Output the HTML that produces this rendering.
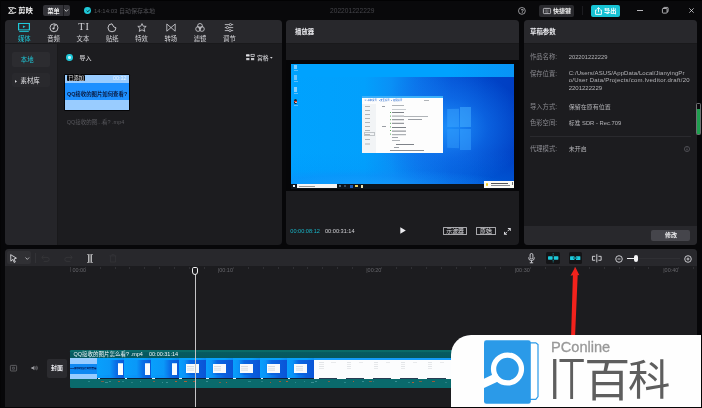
<!DOCTYPE html>
<html lang="zh-CN">
<head>
<meta charset="utf-8">
<title>剪映</title>
<style>
*{box-sizing:border-box;margin:0;padding:0}
html,body{width:702px;height:408px;overflow:hidden;background:#070709}
body{position:relative;font-family:"Liberation Sans","Noto Sans CJK SC",sans-serif;font-size:6.5px;color:#e8e8ea;line-height:1}
.a{position:absolute}
.t{position:absolute;white-space:nowrap;line-height:8px;height:8px}
.panel{position:absolute;background:#1c1c1f;border-radius:4px;overflow:hidden}
.hdr{position:absolute;left:0;top:0;right:0;background:#28282c}
svg{position:absolute;overflow:visible}
</style>
</head>
<body>
<div id="root" style="position:absolute;left:0;top:0;width:702px;height:408px;will-change:transform">
<!-- TOP BAR -->
<div class="a" id="topbar" style="left:0;top:0;width:702px;height:20px;background:#09090b;border-top:1px solid #020203"></div>
<svg style="left:7.7px;top:7.1px" width="8.6" height="7" viewBox="0 0 8.6 7"><path d="M0.5 0.7H5.4L8.2 1.9M0.5 6.3H5.4L8.2 5.1M0.7 0.7L5.6 6.3M0.7 6.3L5.6 0.7" fill="none" stroke="#f2f2f2" stroke-width="0.95" stroke-linejoin="round"/></svg>
<div class="t" style="left:18.2px;top:6.9px;font-size:7.4px;font-weight:bold;color:#f0f0f0">剪映</div>
<div class="a" style="left:43.4px;top:5.2px;width:27px;height:10.8px;background:#333338;border-radius:2px"></div><div class="a" style="left:62.8px;top:5.2px;width:0.7px;height:10.8px;background:#1c1c20"></div>
<div class="t" style="left:47.4px;top:6.6px;font-size:6.1px;color:#f0f0f0;font-weight:bold">菜单</div>
<svg style="left:64.4px;top:9.2px" width="4.6" height="2.8" viewBox="0 0 5 3"><path d="M0.5 0.5L2.5 2.5L4.5 0.5" fill="none" stroke="#ddd" stroke-width="0.9"/></svg>
<div class="a" style="left:84.3px;top:7.2px;width:6.8px;height:6.8px;border-radius:50%;background:#1fc8d8"></div>
<svg style="left:85.5px;top:8.8px" width="4.4" height="3.6" viewBox="0 0 5 4"><path d="M0.7 2L2 3.2L4.3 0.7" fill="none" stroke="#0b0b0d" stroke-width="0.9"/></svg>
<div class="t" style="left:94px;top:6.5px;font-size:6px;color:#505055">14:14:03 自动保存本地</div>
<div class="t" style="left:330px;top:7px;font-size:6.65px;color:#45454a">202201222229</div>


<!-- top right controls -->
<svg style="left:518.4px;top:7px" width="7.8" height="7.8" viewBox="0 0 7.8 7.8"><circle cx="3.9" cy="3.9" r="3.4" fill="none" stroke="#c0c0c4" stroke-width="0.75"/></svg>
<div class="t" style="left:518.4px;top:7px;width:7.8px;text-align:center;font-size:5px;color:#c8c8cc;font-weight:bold">?</div>
<div class="a" style="left:539px;top:4.5px;width:34.5px;height:12px;background:#2a2a2e;border-radius:2px"></div>
<svg style="left:543px;top:7.5px" width="8" height="6" viewBox="0 0 8 6"><rect x="0.4" y="0.4" width="7.2" height="5.2" rx="0.8" fill="none" stroke="#d8d8dc" stroke-width="0.8"/><path d="M1.8 2H6.2M1.8 3.2H6.2M2.6 4.4H5.4" stroke="#d8d8dc" stroke-width="0.6" stroke-dasharray="0.8 0.5"/></svg>
<div class="t" style="left:553px;top:6.5px;font-size:6px;font-weight:bold;color:#f0f0f0">快捷键</div>
<div class="a" style="left:581.5px;top:6px;width:0.8px;height:9px;background:#1c1c20"></div>
<div class="a" style="left:591px;top:4.5px;width:28.5px;height:12px;background:#17c3d4;border-radius:2px"></div>
<svg style="left:594.5px;top:6.5px" width="7" height="8" viewBox="0 0 7 8"><path d="M1.8 3H0.6V7.4H6.4V3H5.2M3.5 5.2V0.8M1.9 2.2L3.5 0.6L5.1 2.2" fill="none" stroke="#fff" stroke-width="0.9"/></svg>
<div class="t" style="left:604px;top:6.5px;font-size:6.2px;font-weight:bold;color:#fff">导出</div>
<div class="a" style="left:637.2px;top:10.2px;width:5.4px;height:0.9px;background:#b8b8bc"></div>
<svg style="left:662.2px;top:7.4px" width="6.6" height="6.6" viewBox="0 0 8 8"><rect x="0.5" y="1.8" width="5.6" height="5.6" rx="0.8" fill="none" stroke="#e0e0e4" stroke-width="0.9"/><path d="M2 1.8V1.2Q2 0.5 2.7 0.5H6.6Q7.4 0.5 7.4 1.3V5.2Q7.4 6 6.6 6H6.1" fill="none" stroke="#e0e0e4" stroke-width="0.9"/></svg>
<svg style="left:689px;top:8.4px" width="5" height="5" viewBox="0 0 6 6"><path d="M0.4 0.4L5.6 5.6M5.6 0.4L0.4 5.6" stroke="#e0e0e4" stroke-width="0.9"/></svg>

<!-- MEDIA PANEL -->
<div class="panel" id="media" style="left:5px;top:20.3px;width:277px;height:224.4px">
  <div class="hdr" style="height:23px;border-bottom:1px solid #19191b;box-sizing:content-box"></div>
  <div class="a" style="left:0;top:24px;width:52px;bottom:0;background:#252529"></div><div class="a" style="left:52px;top:24px;width:1px;bottom:0;background:#19191b"></div>
</div>


<!-- tabs -->
<svg style="left:18.4px;top:23.2px" width="12" height="9.4" viewBox="0 0 10 9.4" preserveAspectRatio="none"><rect x="0.5" y="0.5" width="9" height="6.4" fill="none" stroke="#1fc8d8" stroke-width="1"/><path d="M4.1 2.4L6.3 3.7L4.1 5Z" fill="#1fc8d8"/><path d="M1 8.6H9" stroke="#1fc8d8" stroke-width="0.9"/></svg>
<div class="t" style="left:14.3px;top:35px;width:20px;text-align:center;font-size:6.3px;color:#1fc8d8">媒体</div>
<svg style="left:48.6px;top:23.2px" width="10" height="9.4" viewBox="0 0 10 9.4"><circle cx="5" cy="4.8" r="4" fill="none" stroke="#d6d6da" stroke-width="0.9"/><circle cx="4.4" cy="5.6" r="1" fill="#d6d6da"/><path d="M5.2 5.6V1.8L6.8 2.6" fill="none" stroke="#d6d6da" stroke-width="0.8"/></svg>
<div class="t" style="left:43.6px;top:35px;width:20px;text-align:center;font-size:6.3px;color:#d6d6da">音频</div>
<div class="t" style="left:77.4px;top:22.4px;width:12px;text-align:center;font-family:'Liberation Serif',serif;font-size:10.2px;line-height:10px;height:10px;color:#d6d6da;letter-spacing:0.9px;text-indent:0.9px">TI</div>
<div class="t" style="left:72.9px;top:35px;width:20px;text-align:center;font-size:6.3px;color:#d6d6da">文本</div>
<svg style="left:107.2px;top:23.2px" width="10" height="9.4" viewBox="0 0 10 9.4"><path d="M5 0.8A4 4 0 1 0 9 4.8Q6.5 5 5 0.8Z" fill="none" stroke="#d6d6da" stroke-width="0.9"/></svg>
<div class="t" style="left:102.2px;top:35px;width:20px;text-align:center;font-size:6.3px;color:#d6d6da">贴纸</div>
<svg style="left:136.5px;top:23.2px" width="10" height="9.4" viewBox="0 0 10 9.4"><path d="M5 0.6L6.2 3.2L9.2 3.4L7 5.4L7.8 8.4L5 6.8L2.2 8.4L3 5.4L0.8 3.4L3.8 3.2Z" fill="none" stroke="#d6d6da" stroke-width="0.8"/></svg>
<div class="t" style="left:131.5px;top:35px;width:20px;text-align:center;font-size:6.3px;color:#d6d6da">特效</div>
<svg style="left:165.8px;top:23.2px" width="10" height="9.4" viewBox="0 0 10 9.4"><path d="M0.8 1L9.2 8.2V1L0.8 8.2Z" fill="none" stroke="#d6d6da" stroke-width="0.8"/></svg>
<div class="t" style="left:160.8px;top:35px;width:20px;text-align:center;font-size:6.3px;color:#d6d6da">转场</div>
<svg style="left:195.1px;top:23.2px" width="10" height="9.4" viewBox="0 0 10 9.4"><circle cx="5" cy="2.9" r="2.4" fill="none" stroke="#d6d6da" stroke-width="0.8"/><circle cx="3.1" cy="6" r="2.4" fill="none" stroke="#d6d6da" stroke-width="0.8"/><circle cx="6.9" cy="6" r="2.4" fill="none" stroke="#d6d6da" stroke-width="0.8"/></svg>
<div class="t" style="left:190.1px;top:35px;width:20px;text-align:center;font-size:6.3px;color:#d6d6da">滤镜</div>
<svg style="left:224.4px;top:23.2px" width="10" height="9.4" viewBox="0 0 10 9.4"><path d="M0.8 1.6H9.2M0.8 4.6H9.2M0.8 7.6H9.2" stroke="#d6d6da" stroke-width="0.8"/><circle cx="6.4" cy="1.6" r="1.1" fill="#28282c" stroke="#d6d6da" stroke-width="0.7"/><circle cx="3.4" cy="4.6" r="1.1" fill="#28282c" stroke="#d6d6da" stroke-width="0.7"/><circle cx="6" cy="7.6" r="1.1" fill="#28282c" stroke="#d6d6da" stroke-width="0.7"/></svg>
<div class="t" style="left:219.4px;top:35px;width:20px;text-align:center;font-size:6.3px;color:#d6d6da">调节</div>
<!-- media sidebar -->
<div class="a" style="left:12.3px;top:52px;width:38px;height:14.8px;background:#2c2c30;border-radius:2px"></div>
<div class="t" style="left:20.8px;top:56.1px;font-size:6.4px;color:#1fc8d8">本地</div>
<div class="a" style="left:12.3px;top:72.7px;width:38px;height:14.8px;background:#29292d;border-radius:2px"></div>
<svg style="left:15.2px;top:80px" width="2" height="2.8" viewBox="0 0 2.5 3.5"><path d="M0 0L2.5 1.75L0 3.5Z" fill="#d8d8dc"/></svg>
<div class="t" style="left:20.6px;top:77.2px;font-size:6.4px;color:#e4e4e8">素材库</div>
<!-- import -->
<div class="a" style="left:66.4px;top:54.3px;width:6.8px;height:6.8px;border-radius:50%;background:#1fc8d8"></div>
<div class="a" style="left:68.4px;top:56.4px;width:2.6px;height:2.6px;border-radius:50%;background:#bff4fa"></div>
<div class="t" style="left:79.5px;top:54px;font-size:6px;color:#e4e4e8">导入</div>
<!-- grid toggle -->
<svg style="left:246px;top:54px" width="8.5" height="6.5" viewBox="0 0 8.5 6.5"><rect x="0" y="0.3" width="3.6" height="2.2" rx="0.6" fill="#e0e0e4"/><rect x="5" y="0.3" width="3.2" height="2.2" fill="none" stroke="#e0e0e4" stroke-width="0.7"/><rect x="0.2" y="4" width="3.2" height="2.2" fill="#c8c8cc"/><rect x="5" y="4" width="3.2" height="2.2" fill="#c8c8cc"/></svg>
<div class="t" style="left:257px;top:54px;font-size:5.8px;color:#e4e4e8">宫格</div>
<svg style="left:270px;top:56.8px" width="2.6" height="1.8" viewBox="0 0 2.6 1.8"><path d="M0 0H2.6L1.3 1.8Z" fill="#d0d0d4"/></svg>
<!-- thumbnail -->
<div class="a" style="left:63.9px;top:73.8px;width:66.1px;height:37.6px;background:#050507;border-radius:1.5px;overflow:hidden">
  <div class="a" style="left:1px;top:0.8px;width:64.4px;height:35.4px;background:#99ccff"></div>
  <div class="a" style="left:1px;top:8.9px;width:64.4px;height:16.9px;background:#1e90ff"></div>
  <div class="a" style="left:3.6px;top:1px;width:17.2px;height:6px;background:#0a0a0c;border-radius:1px"></div>
  <div class="t" style="left:4.4px;top:0.1px;font-size:5.2px;color:#f0f0f0">已添加</div>
  <div class="t" style="right:3.4px;top:0.6px;font-size:5.4px;color:#e4f2ff">00:32</div>
  <div class="t" style="left:1px;top:15.8px;width:64.4px;text-align:center;font-size:5.4px;color:#0a1a40;font-weight:bold">QQ接收的图片如何查看?</div>
</div>
<div class="t" style="left:66.8px;top:117.6px;font-size:5.5px;color:#58585d">QQ接收的图...看? .mp4</div>

<!-- PLAYER PANEL -->
<div class="panel" id="player" style="left:286px;top:20.3px;width:233px;height:224.4px">
  <div class="hdr" style="height:23px;border-bottom:1px solid #19191b;box-sizing:content-box"></div>
</div>


<!-- player -->
<div class="t" style="left:295px;top:28px;font-size:6.4px;color:#ececf0;font-weight:bold">播放器</div>
<div class="a" id="canvas" style="left:286px;top:60px;width:233px;height:131px;background:#060608"></div>
<div class="a" id="video" style="left:291px;top:63.7px;width:223.3px;height:125px;overflow:hidden;background:#00a2fe">
  <!-- wallpaper -->
  <div class="a" style="left:0;top:0;width:100%;height:100%;background:linear-gradient(90deg,#00a2fe 0%,#02a0fc 33%,#0a90f6 45%,#0a72e8 57%,#0452d4 72%,#0044c8 87%,#003ec2 100%)"></div>
  <div class="a" style="left:40px;top:0;width:184px;height:125px;background:radial-gradient(ellipse 78px 60px at 118px 64px,rgba(30,146,252,0.9),rgba(20,124,244,0.5) 50%,rgba(10,100,230,0) 100%)"></div>
  <div class="a" style="left:0;top:88px;width:100%;height:37px;background:linear-gradient(180deg,rgba(0,150,250,0) 0%,rgba(0,140,248,0.3) 100%)"></div>
  <div class="a" style="left:0;top:95px;width:100%;height:26px;background:radial-gradient(ellipse 150px 16px at 70px 26px,rgba(24,156,252,0.75),rgba(20,140,248,0.35) 60%,rgba(10,110,236,0) 100%)"></div>
  <div class="a" style="left:0;top:0;width:100%;height:13.5px;background:linear-gradient(90deg,#00a2fe 0%,#00a2fe 72%,#0894f6 100%)"></div>
  <!-- windows logo -->
  <div class="a" style="left:156px;top:45.5px;width:12px;height:18px;background:rgba(60,165,255,0.5);transform:perspective(60px) rotateY(-8deg)"></div>
  <div class="a" style="left:169px;top:43.5px;width:11px;height:20px;background:rgba(70,175,255,0.55)"></div>
  <div class="a" style="left:156px;top:65px;width:12px;height:19px;background:rgba(55,160,252,0.45);transform:perspective(60px) rotateY(-8deg)"></div>
  <div class="a" style="left:169px;top:65px;width:11px;height:21.5px;background:rgba(60,165,255,0.5)"></div>
  <!-- desktop icons -->
  <div class="a" style="left:3px;top:1.4px;width:3.2px;height:4px;background:#7ccbfd"></div>
  <div class="a" style="left:2.6px;top:6.4px;width:4px;height:0.9px;background:#5cc0fd"></div>
  <div class="a" style="left:3px;top:11.8px;width:3.2px;height:4.2px;background:#6cc4fc"></div>
  <div class="a" style="left:2.6px;top:17.6px;width:4px;height:0.9px;background:#5cc0fd"></div>
  <div class="a" style="left:3px;top:23.8px;width:3.2px;height:4.2px;background:#84cefd"></div>
  <div class="a" style="left:2.6px;top:29.4px;width:4px;height:0.9px;background:#5cc0fd"></div>
  <div class="a" style="left:2.8px;top:34.9px;width:3.6px;height:5px;background:#2a2226;border-radius:50% 50% 40% 40%"></div>
  <div class="a" style="left:3.6px;top:37px;width:2px;height:2.6px;background:#f0f0f0;border-radius:40%"></div>
  <div class="a" style="left:2.8px;top:37.4px;width:3.6px;height:1.2px;background:#e43a28"></div>
  <div class="a" style="left:2.6px;top:41px;width:4px;height:0.9px;background:#5cc0fd"></div>
  <!-- app window -->
  <div class="a" style="left:71.2px;top:32.1px;width:81px;height:57.5px;background:#fdfdfd;overflow:hidden">
    <div class="a" style="left:0;top:0;width:100%;height:2.2px;background:#3cb0fa"></div>
    <div class="t" style="left:2.4px;top:2.4px;font-size:2.3px;line-height:4px;height:4px;color:#2a6ad0">▣ 基本设置 &#160; ▸ 安全设置 &#160; ▸ 权限设置</div>
    <div class="a" style="left:0;top:8px;width:14px;height:50px;background:#f2f4f6"></div>
    <div class="a" style="left:3px;top:10px;width:5px;height:1px;background:#b0b4b8;box-shadow:0 4px 0 #b0b4b8,0 8px 0 #b0b4b8,0 12px 0 #b0b4b8,0 16px 0 #b0b4b8,0 20px 0 #b0b4b8,0 24px 0 #b0b4b8,0 28px 0 #b0b4b8,0 33px 0 #b0b4b8,0 37.5px 0 #b0b4b8"></div>
    <div class="a" style="left:2px;top:36.5px;width:11px;height:4px;border:0.5px solid #c0c4c8"></div>
    <div class="a" style="left:20px;top:10.5px;width:3px;height:1px;background:#9a9ea4"></div>
    <div class="a" style="left:20px;top:30.5px;width:4px;height:1px;background:#9a9ea4"></div>
    <div class="a" style="left:30px;top:9.5px;width:12px;height:1px;background:#b0b4b8"></div>
    <div class="a" style="left:30px;top:13px;width:14px;height:0.8px;background:#c8ccd0"></div>
    <div class="a" style="left:30px;top:16.5px;width:12px;height:1px;background:#7e8288;box-shadow:0 3.6px 0 #9a9ea4,0 7.2px 0 #7e8288,0 10.8px 0 #7e8288"></div>
    <div class="a" style="left:42px;top:20.1px;width:24px;height:1px;background:#b0b4b8"></div>
    <div class="a" style="left:46px;top:23.7px;width:14px;height:1px;background:#9a9ea4"></div>
    <div class="a" style="left:28px;top:16.5px;width:1.2px;height:1px;background:#58b058;box-shadow:0 3.6px 0 #58b058,0 7.2px 0 #58b058,0 10.8px 0 #58b058,0 14.4px 0 #58b058,0 18px 0 #58b058,0 21.6px 0 #58b058"></div>
    <div class="a" style="left:30px;top:30.9px;width:14px;height:1px;background:#7e8288;box-shadow:0 3.6px 0 #7e8288,0 7.2px 0 #9a9ea4"></div>
    <div class="a" style="left:30px;top:41.5px;width:6px;height:1px;background:#a0a4aa"></div>
    <div class="a" style="left:30px;top:44.5px;width:8px;height:1px;background:#b0b4b8"></div>
    <div class="a" style="left:34px;top:48px;width:18px;height:1px;background:#7e8288"></div>
    <div class="a" style="left:32px;top:51.5px;width:5px;height:1px;background:#9a9ea4"></div>
    <div class="a" style="left:28px;top:54.5px;width:34px;height:1px;background:#8a8e94"></div>
    <div class="a" style="left:34px;top:57px;width:10px;height:1px;background:#9a9ea4"></div>
    <div class="a" style="left:62px;top:4px;width:5px;height:0.8px;background:#b0b4b8"></div>
  </div>
  <!-- taskbar -->
  <div class="a" style="left:0;top:120.3px;width:100%;height:4.7px;background:#0d141c"></div>
  <div class="a" style="left:1.6px;top:121.4px;width:2.4px;height:2.4px;background:#e8f0f8"></div>
  <div class="a" style="left:5.8px;top:120.8px;width:39.8px;height:3.6px;background:#f4f4f4"></div>
  <div class="a" style="left:8px;top:122.2px;width:16px;height:0.8px;background:#9a9a9a"></div>
  <div class="a" style="left:48px;top:121.6px;width:2px;height:2px;background:#5a6a7a"></div>
  <div class="a" style="left:53px;top:121.6px;width:2px;height:2px;background:#3a4a5a"></div>
  <div class="a" style="left:58.6px;top:121.2px;width:3px;height:3px;background:#1a5ab8"></div>
  <div class="a" style="left:64px;top:121.4px;width:3px;height:2.4px;background:#e8d060"></div>
  <div class="a" style="left:70.4px;top:121.6px;width:1.6px;height:2.4px;background:#e8e0b0"></div>
  <!-- notification -->
  <div class="a" style="left:193px;top:117.8px;width:29.5px;height:6.4px;background:#fbfbf6"></div>
  <div class="a" style="left:194.6px;top:119.8px;width:2.6px;height:2.6px;background:#f0d020;border-radius:50%"></div>
  <div class="a" style="left:199.5px;top:119.4px;width:17px;height:1.2px;background:#50545a"></div>
  <div class="a" style="left:199.5px;top:121.8px;width:19px;height:0.9px;background:#8a8e94"></div>
  <div class="a" style="left:220.5px;top:118.6px;width:0.8px;height:2.4px;background:#70747a"></div>
</div>
<!-- player controls -->
<div class="t" style="left:290.3px;top:226.5px;font-size:5.6px;color:#18b4c6">00:00:08:12</div>
<div class="t" style="left:325px;top:226.5px;font-size:5.6px;color:#d0d0d4">00:00:31:14</div>
<svg style="left:399.5px;top:227px" width="6" height="7" viewBox="0 0 6 7"><path d="M0.3 0.2L5.8 3.5L0.3 6.8Z" fill="#ececf0"/></svg>
<div class="a" style="left:443.4px;top:226.8px;width:23.4px;height:8px;border:0.75px solid #a8a8ac;border-radius:0.5px"></div>
<div class="t" style="left:443.4px;top:226.8px;width:23.4px;text-align:center;font-size:5.9px;color:#e0e0e4">示波器</div>
<div class="a" style="left:476.2px;top:226.8px;width:19.4px;height:8px;border:0.75px solid #a8a8ac;border-radius:0.5px"></div>
<div class="t" style="left:476.2px;top:226.8px;width:19.4px;text-align:center;font-size:5.9px;color:#e0e0e4">原始</div>
<svg style="left:503.8px;top:227.8px" width="6.8" height="6.8" viewBox="0 0 6.8 6.8"><path d="M3.9 0.5H6.3V2.9M6.3 0.5L3.8 3M2.9 6.3H0.5V3.9M0.5 6.3L3 3.8" fill="none" stroke="#e4e4e8" stroke-width="0.95"/></svg>

<!-- RIGHT PANEL -->
<div class="panel" id="draft" style="left:523.5px;top:20.3px;width:173.5px;height:224.4px">
  <div class="hdr" style="height:22.5px;border-bottom:1px solid #19191b;box-sizing:content-box"></div>
  <div class="a" style="left:0;right:0;bottom:0;height:19px;background:#28282c"></div>
</div>


<!-- draft params -->
<div class="t" style="left:530px;top:28.2px;font-size:6.4px;color:#ececf0;font-weight:bold">草稿参数</div>
<div class="t" style="left:530px;top:53px;font-size:6.3px;color:#8a8a90">作品名称:</div>
<div class="t" style="left:568.7px;top:53px;font-size:5.8px;color:#b4b4b8">202201222229</div>
<div class="t" style="left:530px;top:69.7px;font-size:6.3px;color:#8a8a90">保存位置:</div>
<div class="t" style="left:568.7px;top:69.7px;font-size:6px;letter-spacing:0.1px;color:#b4b4b8;line-height:7.8px;height:auto;white-space:nowrap;width:130px">C:/Users/ASUS/AppData/Local/JianyingPr<br><span style="letter-spacing:0.24px">o/User Data/Projects/com.lveditor.draft/20</span><br><span style="letter-spacing:0">2201222229</span></div>
<div class="t" style="left:530px;top:103px;font-size:6.3px;color:#8a8a90">导入方式:</div>
<div class="t" style="left:568.7px;top:103px;font-size:6px;color:#b4b4b8">保留在原有位置</div>
<div class="t" style="left:530px;top:118.6px;font-size:6.3px;color:#8a8a90">色彩空间:</div>
<div class="t" style="left:568.7px;top:118.6px;font-size:5.85px;color:#b4b4b8">标准 SDR - Rec.709</div>
<div class="a" style="left:530px;top:136.2px;width:161px;height:0.8px;background:#2a2a2e"></div>
<div class="t" style="left:530px;top:145px;font-size:6.3px;color:#8a8a90">代理模式:</div>
<div class="t" style="left:568.7px;top:145px;font-size:6px;color:#b4b4b8">未开启</div>
<svg style="left:684px;top:146px" width="6" height="6" viewBox="0 0 6 6"><circle cx="3" cy="3" r="2.6" fill="none" stroke="#6a6a70" stroke-width="0.6"/><path d="M3 2.6V4.4M3 1.5V2" stroke="#8a8a90" stroke-width="0.6"/></svg>
<div class="a" style="left:651.3px;top:230px;width:39.2px;height:10.8px;background:#45454b;border-radius:2px"></div>
<div class="t" style="left:651.3px;top:231.4px;width:39.2px;text-align:center;font-size:6px;color:#f0f0f2;font-weight:bold">修改</div>
<!-- green meter -->
<div class="a" style="left:695.7px;top:103px;width:5px;height:32.4px;background:#0a0a0c;border:0.8px solid #707074;border-radius:1.2px"></div>
<div class="a" style="left:696.9px;top:109px;width:2.7px;height:25px;background:#1e9e4e"></div>

<!-- TIMELINE PANEL -->
<div class="panel" id="timeline" style="left:5px;top:249.3px;width:692px;height:170px;border-radius:4px 4px 0 0">
  <div class="hdr" style="height:16.8px"></div>
</div>


<!-- timeline toolbar -->
<div class="a" style="left:7.4px;top:251.4px;width:24px;height:12.6px;background:#303034;border-radius:2px"></div>
<svg style="left:10.4px;top:253.8px" width="7.6" height="9" viewBox="0 0 8 9.5"><path d="M0.7 0.7L6.8 4.4L4.2 5.2L5.6 8.4L4.4 8.9L3 5.7L0.9 7.6Z" fill="none" stroke="#ececf0" stroke-width="0.85" stroke-linejoin="round"/></svg>
<svg style="left:24.6px;top:256.8px" width="4.6" height="3" viewBox="0 0 4.6 3"><path d="M0.5 0.5L2.3 2.4L4.1 0.5" fill="none" stroke="#c8c8cc" stroke-width="0.8"/></svg>
<div class="a" style="left:35px;top:252.5px;width:0.8px;height:10.5px;background:#323236"></div>
<svg style="left:40.5px;top:254.5px" width="9" height="7" viewBox="0 0 9 7"><path d="M2.6 0.6L0.7 2.4L2.6 4.2M0.9 2.4H6Q8.2 2.4 8.2 4.4Q8.2 6.4 6 6.4H2.6" fill="none" stroke="#36363a" stroke-width="0.85"/></svg>
<svg style="left:63.5px;top:254.5px" width="9" height="7" viewBox="0 0 9 7"><path d="M6.4 0.6L8.3 2.4L6.4 4.2M8.1 2.4H3Q0.8 2.4 0.8 4.4Q0.8 6.4 3 6.4H6.4" fill="none" stroke="#36363a" stroke-width="0.85"/></svg>
<svg style="left:86.6px;top:253.6px" width="6" height="9" viewBox="0 0 6 9"><path d="M0.3 0.5H1.5V8.5H0.3M5.7 0.5H4.5V8.5H5.7M3 0V9" fill="none" stroke="#f0f0f2" stroke-width="0.7"/></svg>
<svg style="left:108.5px;top:253.8px" width="8" height="8.6" viewBox="0 0 8 8.6"><path d="M0.5 1.8H7.5M2.8 1.8V0.6H5.2V1.8M1.4 1.8V8H6.6V1.8" fill="none" stroke="#343438" stroke-width="0.85"/></svg>
<!-- right tools -->
<svg style="left:527.5px;top:253px" width="7" height="10.4" viewBox="0 0 7 10.4"><rect x="2.1" y="0.5" width="2.8" height="5.4" rx="1.4" fill="none" stroke="#e4e4e8" stroke-width="0.85"/><path d="M0.6 4.4Q0.6 7.6 3.5 7.6Q6.4 7.6 6.4 4.4M3.5 7.6V9.6M1.8 9.8H5.2" fill="none" stroke="#e4e4e8" stroke-width="0.85"/></svg>
<div class="a" style="left:546px;top:252px;width:13.6px;height:12.2px;background:#141416;border-radius:1.5px"></div>
<svg style="left:547.8px;top:253.2px" width="10.4" height="9.8" viewBox="0 0 11.2 10.6"><rect x="0" y="3.4" width="5" height="3.8" rx="0.6" fill="#1ccadb"/><rect x="6.2" y="3.4" width="5" height="3.8" rx="0.6" fill="#1ccadb"/><path d="M5.6 0.4V3M5.6 7.6V10.2" stroke="#1ccadb" stroke-width="0.8" stroke-dasharray="0.9 0.7"/></svg>
<div class="a" style="left:568.5px;top:252px;width:13.4px;height:12.2px;background:#141416;border-radius:1.5px"></div>
<svg style="left:569.9px;top:256px" width="10.4" height="4.1" viewBox="0 0 11.6 4.6"><rect x="0" y="0.2" width="5" height="4.2" rx="0.6" fill="#1ccadb"/><rect x="6.6" y="0.2" width="5" height="4.2" rx="0.6" fill="#1ccadb"/><path d="M3.4 2.3H8.2" stroke="#0f5a62" stroke-width="1.3"/><path d="M4.6 2.3H7" stroke="#1ccadb" stroke-width="0.9"/></svg>
<svg style="left:591.8px;top:254.2px" width="9.6" height="8.6" viewBox="0 0 10.8 9.6"><path d="M3.6 2.6H0.5V7H3.6M7.2 2.6H10.3V7H7.2M5.4 0.2V9.4" fill="none" stroke="#e8e8ec" stroke-width="0.95"/></svg>
<svg style="left:614.8px;top:254.6px" width="8" height="8" viewBox="0 0 8 8"><circle cx="4" cy="4" r="3.3" fill="none" stroke="#e4e4e8" stroke-width="0.85"/><path d="M2.5 4H5.5" stroke="#e4e4e8" stroke-width="0.8"/></svg>
<div class="a" style="left:638px;top:258.1px;width:42px;height:0.9px;background:#303034"></div>
<div class="a" style="left:627px;top:257.8px;width:8px;height:1.5px;background:#f0f0f2"></div>
<div class="a" style="left:634px;top:254.9px;width:4.4px;height:6.8px;background:#f4f4f6;border-radius:2px"></div>
<svg style="left:684.4px;top:254.6px" width="8" height="8" viewBox="0 0 8 8"><circle cx="4" cy="4" r="3.3" fill="none" stroke="#e4e4e8" stroke-width="0.85"/><path d="M2.5 4H5.5M4 2.5V5.5" stroke="#e4e4e8" stroke-width="0.8"/></svg>
<!-- ruler -->
<div class="a" style="left:69.7px;top:267px;width:0.7px;height:5px;background:#38383c"></div>
<div class="t" style="left:72.4px;top:266.2px;font-size:5.5px;color:#66666b">00:00</div>
<div class="t" style="left:217.8px;top:266.2px;font-size:5.5px;color:#66666b">|00:10</div>
<div class="t" style="left:366.2px;top:266.2px;font-size:5.5px;color:#66666b">|00:20</div>
<div class="t" style="left:514.6px;top:266.2px;font-size:5.5px;color:#66666b">|00:30</div>
<div class="t" style="left:663.2px;top:266.2px;font-size:5.5px;color:#66666b">|00:40</div>
<div class="a" style="left:84.8px;top:267px;width:0.6px;height:1.8px;background:#303034"></div>
<div class="a" style="left:99.7px;top:267px;width:0.6px;height:1.8px;background:#303034"></div>
<div class="a" style="left:114.5px;top:267px;width:0.6px;height:1.8px;background:#303034"></div>
<div class="a" style="left:129.3px;top:267px;width:0.6px;height:1.8px;background:#303034"></div>
<div class="a" style="left:144.2px;top:267px;width:0.6px;height:1.8px;background:#303034"></div>
<div class="a" style="left:159.0px;top:267px;width:0.6px;height:1.8px;background:#303034"></div>
<div class="a" style="left:173.8px;top:267px;width:0.6px;height:1.8px;background:#303034"></div>
<div class="a" style="left:188.6px;top:267px;width:0.6px;height:1.8px;background:#303034"></div>
<div class="a" style="left:203.5px;top:267px;width:0.6px;height:1.8px;background:#303034"></div>
<div class="a" style="left:233.1px;top:267px;width:0.6px;height:1.8px;background:#303034"></div>
<div class="a" style="left:248.0px;top:267px;width:0.6px;height:1.8px;background:#303034"></div>
<div class="a" style="left:262.8px;top:267px;width:0.6px;height:1.8px;background:#303034"></div>
<div class="a" style="left:277.6px;top:267px;width:0.6px;height:1.8px;background:#303034"></div>
<div class="a" style="left:292.5px;top:267px;width:0.6px;height:1.8px;background:#303034"></div>
<div class="a" style="left:307.3px;top:267px;width:0.6px;height:1.8px;background:#303034"></div>
<div class="a" style="left:322.1px;top:267px;width:0.6px;height:1.8px;background:#303034"></div>
<div class="a" style="left:336.9px;top:267px;width:0.6px;height:1.8px;background:#303034"></div>
<div class="a" style="left:351.8px;top:267px;width:0.6px;height:1.8px;background:#303034"></div>
<div class="a" style="left:381.4px;top:267px;width:0.6px;height:1.8px;background:#303034"></div>
<div class="a" style="left:396.3px;top:267px;width:0.6px;height:1.8px;background:#303034"></div>
<div class="a" style="left:411.1px;top:267px;width:0.6px;height:1.8px;background:#303034"></div>
<div class="a" style="left:425.9px;top:267px;width:0.6px;height:1.8px;background:#303034"></div>
<div class="a" style="left:440.8px;top:267px;width:0.6px;height:1.8px;background:#303034"></div>
<div class="a" style="left:455.6px;top:267px;width:0.6px;height:1.8px;background:#303034"></div>
<div class="a" style="left:470.4px;top:267px;width:0.6px;height:1.8px;background:#303034"></div>
<div class="a" style="left:485.2px;top:267px;width:0.6px;height:1.8px;background:#303034"></div>
<div class="a" style="left:500.1px;top:267px;width:0.6px;height:1.8px;background:#303034"></div>
<div class="a" style="left:529.7px;top:267px;width:0.6px;height:1.8px;background:#303034"></div>
<div class="a" style="left:544.6px;top:267px;width:0.6px;height:1.8px;background:#303034"></div>
<div class="a" style="left:559.4px;top:267px;width:0.6px;height:1.8px;background:#303034"></div>
<div class="a" style="left:574.2px;top:267px;width:0.6px;height:1.8px;background:#303034"></div>
<div class="a" style="left:589.1px;top:267px;width:0.6px;height:1.8px;background:#303034"></div>
<div class="a" style="left:603.9px;top:267px;width:0.6px;height:1.8px;background:#303034"></div>
<div class="a" style="left:618.7px;top:267px;width:0.6px;height:1.8px;background:#303034"></div>
<div class="a" style="left:633.5px;top:267px;width:0.6px;height:1.8px;background:#303034"></div>
<div class="a" style="left:648.4px;top:267px;width:0.6px;height:1.8px;background:#303034"></div>
<div class="a" style="left:678.0px;top:267px;width:0.6px;height:1.8px;background:#303034"></div>
<div class="a" style="left:692.9px;top:267px;width:0.6px;height:1.8px;background:#303034"></div>
<!-- track header -->
<svg style="left:10.2px;top:365px" width="7" height="6.4" viewBox="0 0 7 6.4"><rect x="0.4" y="0.4" width="6.2" height="5.6" rx="0.8" fill="none" stroke="#77777c" stroke-width="0.7"/><path d="M2.6 2.2H4.4V4.2H2.6Z" fill="none" stroke="#77777c" stroke-width="0.6"/></svg>
<svg style="left:31.4px;top:365.2px" width="7" height="6" viewBox="0 0 7 6"><path d="M0.5 2.1H1.8L3.4 0.7V5.3L1.8 3.9H0.5Z" fill="#9a9a9f"/><path d="M4.5 1.6Q5.6 3 4.5 4.4M5.6 0.8Q7.2 3 5.6 5.2" fill="none" stroke="#9a9a9f" stroke-width="0.6"/></svg>
<div class="a" style="left:46.7px;top:358.6px;width:20.6px;height:19.6px;background:#2b2b2f;border-radius:2px"></div>
<div class="t" style="left:46.7px;top:364.4px;width:20.6px;text-align:center;font-size:6px;font-weight:bold;color:#ececf0">封面</div>
<!-- clip -->
<div class="a" style="left:70px;top:349.6px;width:395px;height:38px;background:#0a6a6c;border-radius:1.5px 0 0 1.5px"></div>
<div class="a" style="left:70px;top:349.6px;width:395px;height:8.4px;background:linear-gradient(180deg,#0a6a68 0,#0a6a68 1.6px,#065a60 2.6px,#06585e 100%);border-radius:1.5px 0 0 0"></div>
<div class="t" style="left:73.5px;top:350.2px;font-size:5.5px;color:#f0f6f8">QQ接收的图片怎么看? .mp4 &#160;&#160; 00:00:31:14</div>
<div class="a" style="left:70.0px;top:357.8px;width:27.45px;height:20.8px;background:#99ccff"></div>
<div class="a" style="left:70.0px;top:363.5px;width:27.45px;height:10px;background:#1088f2"></div>
<div class="t" style="left:70.0px;top:366.5px;width:27.15px;text-align:center;font-size:2.5px;line-height:4px;height:4px;color:#061040;font-weight:bold;overflow:hidden">QQ接收的图片如何查看?</div>
<div class="a" style="left:97.15px;top:357.8px;width:27.45px;height:20.8px;background:linear-gradient(90deg,#08a0fc 0%,#0a98f8 45%,#0a6ee6 68%,#0a58d8 100%)"></div>
<div class="a" style="left:97.15px;top:357.8px;width:27.45px;height:2.6px;background:linear-gradient(90deg,#08a0fc 0%,#08a0fc 70%,#0a8cf2 100%)"></div>
<div class="a" style="left:97.15px;top:375.2px;width:19.00px;height:2.4px;background:linear-gradient(90deg,rgba(8,156,250,0.9),rgba(8,140,246,0.5) 60%,rgba(10,100,226,0))"></div>
<div class="a" style="left:97.15px;top:377.6px;width:27.45px;height:1px;background:#0c2038"></div>
<div class="a" style="left:97.65px;top:377.5px;width:2.6px;height:1.2px;background:#e8f0f8"></div>
<div class="a" style="left:117.55px;top:363px;width:5.6px;height:12px;background:#fafcfe"></div>
<div class="a" style="left:117.55px;top:363px;width:5.6px;height:1.4px;background:#b8dcfb"></div>
<div class="a" style="left:124.30px;top:357.8px;width:27.45px;height:20.8px;background:linear-gradient(90deg,#08a0fc 0%,#0a98f8 45%,#0a6ee6 68%,#0a58d8 100%)"></div>
<div class="a" style="left:124.30px;top:357.8px;width:27.45px;height:2.6px;background:linear-gradient(90deg,#08a0fc 0%,#08a0fc 70%,#0a8cf2 100%)"></div>
<div class="a" style="left:124.30px;top:375.2px;width:19.00px;height:2.4px;background:linear-gradient(90deg,rgba(8,156,250,0.9),rgba(8,140,246,0.5) 60%,rgba(10,100,226,0))"></div>
<div class="a" style="left:124.30px;top:377.6px;width:27.45px;height:1px;background:#0c2038"></div>
<div class="a" style="left:124.80px;top:377.5px;width:2.6px;height:1.2px;background:#e8f0f8"></div>
<div class="a" style="left:144.70px;top:363px;width:5.6px;height:12px;background:#fafcfe"></div>
<div class="a" style="left:144.70px;top:363px;width:5.6px;height:1.4px;background:#b8dcfb"></div>
<div class="a" style="left:151.45px;top:357.8px;width:27.45px;height:20.8px;background:linear-gradient(90deg,#08a0fc 0%,#0a98f8 45%,#0a6ee6 68%,#0a58d8 100%)"></div>
<div class="a" style="left:151.45px;top:357.8px;width:27.45px;height:2.6px;background:linear-gradient(90deg,#08a0fc 0%,#08a0fc 70%,#0a8cf2 100%)"></div>
<div class="a" style="left:151.45px;top:375.2px;width:19.00px;height:2.4px;background:linear-gradient(90deg,rgba(8,156,250,0.9),rgba(8,140,246,0.5) 60%,rgba(10,100,226,0))"></div>
<div class="a" style="left:151.45px;top:377.6px;width:27.45px;height:1px;background:#0c2038"></div>
<div class="a" style="left:151.95px;top:377.5px;width:2.6px;height:1.2px;background:#e8f0f8"></div>
<div class="a" style="left:171.85px;top:363px;width:5.6px;height:12px;background:#fafcfe"></div>
<div class="a" style="left:171.85px;top:363px;width:5.6px;height:1.4px;background:#b8dcfb"></div>
<div class="a" style="left:178.60px;top:357.8px;width:27.45px;height:20.8px;background:linear-gradient(90deg,#08a0fc 0%,#0a94f8 20%,#0a66e2 42%,#0a54d6 100%)"></div>
<div class="a" style="left:178.60px;top:357.8px;width:27.45px;height:2.6px;background:linear-gradient(90deg,#08a0fc 0%,#08a0fc 70%,#0a8cf2 100%)"></div>
<div class="a" style="left:178.60px;top:375.2px;width:19.00px;height:2.4px;background:linear-gradient(90deg,rgba(8,156,250,0.9),rgba(8,140,246,0.5) 60%,rgba(10,100,226,0))"></div>
<div class="a" style="left:178.60px;top:377.6px;width:27.45px;height:1px;background:#0c2038"></div>
<div class="a" style="left:179.10px;top:377.5px;width:2.6px;height:1.2px;background:#e8f0f8"></div>
<div class="a" style="left:185.50px;top:364px;width:13.2px;height:9px;background:#f8fafc"></div>
<div class="a" style="left:187.00px;top:366.4px;width:7px;height:0.6px;background:#d8dce2;box-shadow:0 1.8px 0 #e0e4e8,0 3.6px 0 #d8dce2"></div>
<div class="a" style="left:205.75px;top:357.8px;width:27.45px;height:20.8px;background:linear-gradient(90deg,#08a0fc 0%,#0a94f8 20%,#0a66e2 42%,#0a54d6 100%)"></div>
<div class="a" style="left:205.75px;top:357.8px;width:27.45px;height:2.6px;background:linear-gradient(90deg,#08a0fc 0%,#08a0fc 70%,#0a8cf2 100%)"></div>
<div class="a" style="left:205.75px;top:375.2px;width:19.00px;height:2.4px;background:linear-gradient(90deg,rgba(8,156,250,0.9),rgba(8,140,246,0.5) 60%,rgba(10,100,226,0))"></div>
<div class="a" style="left:205.75px;top:377.6px;width:27.45px;height:1px;background:#0c2038"></div>
<div class="a" style="left:206.25px;top:377.5px;width:2.6px;height:1.2px;background:#e8f0f8"></div>
<div class="a" style="left:212.65px;top:364px;width:13.2px;height:9px;background:#f8fafc"></div>
<div class="a" style="left:214.15px;top:366.4px;width:7px;height:0.6px;background:#d8dce2;box-shadow:0 1.8px 0 #e0e4e8,0 3.6px 0 #d8dce2"></div>
<div class="a" style="left:232.90px;top:357.8px;width:27.45px;height:20.8px;background:linear-gradient(90deg,#08a0fc 0%,#0a94f8 20%,#0a66e2 42%,#0a54d6 100%)"></div>
<div class="a" style="left:232.90px;top:357.8px;width:27.45px;height:2.6px;background:linear-gradient(90deg,#08a0fc 0%,#08a0fc 70%,#0a8cf2 100%)"></div>
<div class="a" style="left:232.90px;top:375.2px;width:19.00px;height:2.4px;background:linear-gradient(90deg,rgba(8,156,250,0.9),rgba(8,140,246,0.5) 60%,rgba(10,100,226,0))"></div>
<div class="a" style="left:232.90px;top:377.6px;width:27.45px;height:1px;background:#0c2038"></div>
<div class="a" style="left:233.40px;top:377.5px;width:2.6px;height:1.2px;background:#e8f0f8"></div>
<div class="a" style="left:239.80px;top:364px;width:13.2px;height:9px;background:#f8fafc"></div>
<div class="a" style="left:241.30px;top:366.4px;width:7px;height:0.6px;background:#d8dce2;box-shadow:0 1.8px 0 #e0e4e8,0 3.6px 0 #d8dce2"></div>
<div class="a" style="left:260.05px;top:357.8px;width:27.45px;height:20.8px;background:linear-gradient(90deg,#08a0fc 0%,#0a94f8 20%,#0a66e2 42%,#0a54d6 100%)"></div>
<div class="a" style="left:260.05px;top:357.8px;width:27.45px;height:2.6px;background:linear-gradient(90deg,#08a0fc 0%,#08a0fc 70%,#0a8cf2 100%)"></div>
<div class="a" style="left:260.05px;top:375.2px;width:19.00px;height:2.4px;background:linear-gradient(90deg,rgba(8,156,250,0.9),rgba(8,140,246,0.5) 60%,rgba(10,100,226,0))"></div>
<div class="a" style="left:260.05px;top:377.6px;width:27.45px;height:1px;background:#0c2038"></div>
<div class="a" style="left:260.55px;top:377.5px;width:2.6px;height:1.2px;background:#e8f0f8"></div>
<div class="a" style="left:266.95px;top:364px;width:13.2px;height:9px;background:#f8fafc"></div>
<div class="a" style="left:268.45px;top:366.4px;width:7px;height:0.6px;background:#d8dce2;box-shadow:0 1.8px 0 #e0e4e8,0 3.6px 0 #d8dce2"></div>
<div class="a" style="left:287.20px;top:357.8px;width:27.45px;height:20.8px;background:linear-gradient(90deg,#08a0fc 0%,#0a94f8 20%,#0a66e2 42%,#0a54d6 100%)"></div>
<div class="a" style="left:287.20px;top:357.8px;width:27.45px;height:2.6px;background:linear-gradient(90deg,#08a0fc 0%,#08a0fc 70%,#0a8cf2 100%)"></div>
<div class="a" style="left:287.20px;top:375.2px;width:19.00px;height:2.4px;background:linear-gradient(90deg,rgba(8,156,250,0.9),rgba(8,140,246,0.5) 60%,rgba(10,100,226,0))"></div>
<div class="a" style="left:287.20px;top:377.6px;width:27.45px;height:1px;background:#0c2038"></div>
<div class="a" style="left:287.70px;top:377.5px;width:2.6px;height:1.2px;background:#e8f0f8"></div>
<div class="a" style="left:294.10px;top:364px;width:13.2px;height:9px;background:#f8fafc"></div>
<div class="a" style="left:295.60px;top:366.4px;width:7px;height:0.6px;background:#d8dce2;box-shadow:0 1.8px 0 #e0e4e8,0 3.6px 0 #d8dce2"></div>
<div class="a" style="left:314.35px;top:357.8px;width:145.65px;height:20.8px;background:#fcfdfe"></div>
<div class="a" style="left:314.35px;top:357.8px;width:145.65px;height:2.2px;background:#149af8"></div>
<div class="a" style="left:318.85px;top:377.5px;width:18.15px;height:1.1px;background:#2a3c54"></div>
<div class="a" style="left:319.35px;top:362px;width:4.5px;height:0.5px;background:#e2e5e8;box-shadow:0 2px 0 #e8eaec,0 4px 0 #e2e5e8,0 6px 0 #e8eaec,12px 0 0 #e8eaec"></div>
<div class="a" style="left:346.00px;top:377.5px;width:18.15px;height:1.1px;background:#2a3c54"></div>
<div class="a" style="left:346.50px;top:362px;width:4.5px;height:0.5px;background:#e2e5e8;box-shadow:0 2px 0 #e8eaec,0 4px 0 #e2e5e8,0 6px 0 #e8eaec,12px 0 0 #e8eaec"></div>
<div class="a" style="left:373.15px;top:377.5px;width:18.15px;height:1.1px;background:#2a3c54"></div>
<div class="a" style="left:373.65px;top:362px;width:4.5px;height:0.5px;background:#e2e5e8;box-shadow:0 2px 0 #e8eaec,0 4px 0 #e2e5e8,0 6px 0 #e8eaec,12px 0 0 #e8eaec"></div>
<div class="a" style="left:400.30px;top:377.5px;width:18.15px;height:1.1px;background:#2a3c54"></div>
<div class="a" style="left:400.80px;top:362px;width:4.5px;height:0.5px;background:#e2e5e8;box-shadow:0 2px 0 #e8eaec,0 4px 0 #e2e5e8,0 6px 0 #e8eaec,12px 0 0 #e8eaec"></div>
<div class="a" style="left:427.45px;top:377.5px;width:18.15px;height:1.1px;background:#2a3c54"></div>
<div class="a" style="left:427.95px;top:362px;width:4.5px;height:0.5px;background:#e2e5e8;box-shadow:0 2px 0 #e8eaec,0 4px 0 #e2e5e8,0 6px 0 #e8eaec,12px 0 0 #e8eaec"></div>
<div class="a" style="left:454.60px;top:377.5px;width:18.15px;height:1.1px;background:#2a3c54"></div>
<div class="a" style="left:455.10px;top:362px;width:4.5px;height:0.5px;background:#e2e5e8;box-shadow:0 2px 0 #e8eaec,0 4px 0 #e2e5e8,0 6px 0 #e8eaec,12px 0 0 #e8eaec"></div>
<div class="a" style="left:88.0px;top:381.1px;width:1.6px;height:1px;background:#2a8a8c"></div>
<div class="a" style="left:101.0px;top:381.1px;width:3px;height:1px;background:#7a6048"></div>
<div class="a" style="left:105.0px;top:381.7px;width:3px;height:1px;background:#3a9094"></div>
<div class="a" style="left:109.0px;top:381.4px;width:1.6px;height:1px;background:#3a9094"></div>
<div class="a" style="left:118.0px;top:381.2px;width:1.6px;height:1px;background:#9a5a38"></div>
<div class="a" style="left:122.0px;top:381.2px;width:2.2px;height:1px;background:#2a8a8c"></div>
<div class="a" style="left:131.0px;top:381.7px;width:2.2px;height:1px;background:#2a8084"></div>
<div class="a" style="left:140.0px;top:381.3px;width:1.2px;height:1px;background:#3a9094"></div>
<div class="a" style="left:153.0px;top:381.2px;width:1.6px;height:1px;background:#7a6048"></div>
<div class="a" style="left:162.0px;top:381.7px;width:1.2px;height:1px;background:#3a9094"></div>
<div class="a" style="left:166.0px;top:381.6px;width:2.2px;height:1px;background:#3a9094"></div>
<div class="a" style="left:175.0px;top:381.3px;width:1.6px;height:1px;background:#a86038"></div>
<div class="a" style="left:184.0px;top:381.1px;width:3px;height:1px;background:#a86038"></div>
<div class="a" style="left:193.0px;top:381.1px;width:2.2px;height:1px;background:#9a5a38"></div>
<div class="a" style="left:206.0px;top:381.4px;width:2.2px;height:1px;background:#3a9094"></div>
<div class="a" style="left:219.0px;top:381.8px;width:2.2px;height:1px;background:#7a6048"></div>
<div class="a" style="left:226.0px;top:381.7px;width:1.2px;height:1px;background:#a86038"></div>
<div class="a" style="left:248.0px;top:381.1px;width:3px;height:1px;background:#2a8a8c"></div>
<div class="a" style="left:261.0px;top:381.4px;width:2.2px;height:1px;background:#2a8084"></div>
<div class="a" style="left:270.0px;top:381.6px;width:1.2px;height:1px;background:#9a5a38"></div>
<div class="a" style="left:279.0px;top:381.3px;width:1.6px;height:1px;background:#9a5a38"></div>
<div class="a" style="left:286.0px;top:381.0px;width:2.2px;height:1px;background:#a86038"></div>
<div class="a" style="left:295.0px;top:381.6px;width:1.2px;height:1px;background:#2a8a8c"></div>
<div class="a" style="left:304.0px;top:381.2px;width:1.2px;height:1px;background:#2a8a8c"></div>
<div class="a" style="left:311.0px;top:381.5px;width:3px;height:1px;background:#3a9094"></div>
<div class="a" style="left:315.0px;top:381.2px;width:2.2px;height:1px;background:#3a9094"></div>
<div class="a" style="left:328.0px;top:381.2px;width:2.2px;height:1px;background:#7a6048"></div>
<div class="a" style="left:344.0px;top:381.5px;width:1.6px;height:1px;background:#2a8a8c"></div>
<div class="a" style="left:353.0px;top:381.1px;width:1.2px;height:1px;background:#a86038"></div>
<div class="a" style="left:362.0px;top:381.1px;width:2.2px;height:1px;background:#3a9094"></div>
<div class="a" style="left:369.0px;top:381.1px;width:3px;height:1px;background:#7a6048"></div>
<div class="a" style="left:373.0px;top:381.1px;width:1.2px;height:1px;background:#2a8084"></div>
<div class="a" style="left:395.0px;top:381.0px;width:1.6px;height:1px;background:#3a9094"></div>
<div class="a" style="left:408.0px;top:381.8px;width:1.6px;height:1px;background:#2a8a8c"></div>
<div class="a" style="left:412.0px;top:381.5px;width:2.2px;height:1px;background:#a86038"></div>
<div class="a" style="left:419.0px;top:381.2px;width:3px;height:1px;background:#7a6048"></div>
<div class="a" style="left:432.0px;top:381.2px;width:3px;height:1px;background:#9a5a38"></div>
<div class="a" style="left:445.0px;top:381.7px;width:1.6px;height:1px;background:#2a8084"></div>
<!-- playhead -->
<div class="a" style="left:194.7px;top:272px;width:1.1px;height:136px;background:#c4c4c6"></div>
<div class="a" style="left:191.9px;top:267px;width:6.6px;height:8px;border:1.3px solid #f0f0f2;border-radius:1.8px 1.8px 3px 3px;background:#1c1c1f"></div>
<!-- red arrow -->
<svg style="left:565px;top:265px" width="20" height="72" viewBox="565 265 20 72"><path d="M575.3 267L579.4 275.2L577.7 275L575.1 335.5H571.1L572.9 275.2L570.5 275.8Z" fill="#f2221c"/></svg>


<!-- watermark -->
<div class="a" id="wm" style="left:451.2px;top:335px;width:249.8px;height:71.6px;background:#fefefe;border-radius:20px 0 0 0"></div>
<svg style="left:484px;top:339px;overflow:hidden" width="56" height="66" viewBox="484 339 56 66">
  <path d="M530 342.8H535.8L538 344.6V396.6L535.8 399.4H530" fill="#fff" stroke="#2b9ae8" stroke-width="1.2"/>
  <rect x="484" y="340.3" width="46.8" height="63.5" rx="2.4" fill="#2b9ae8"/>
  <circle cx="507.5" cy="369" r="13.95" fill="none" stroke="#fff" stroke-width="5.3"/>
  <path d="M498.4 376.6L481 384.9" stroke="#fff" stroke-width="8.4" fill="none"/>
</svg>
<div class="a" style="left:551px;top:340.3px;font-size:14.6px;line-height:1;white-space:nowrap;color:#989898;-webkit-text-stroke:0.3px #989898;font-family:'Liberation Sans',sans-serif">PConline</div>
<div class="a" style="left:547.2px;top:347.8px;font-size:55px;line-height:1;color:#5e5e5e;font-family:'Noto Sans CJK SC',sans-serif;font-weight:300">I</div>
<div class="a" style="left:558px;top:347.8px;font-size:55px;line-height:1;color:#5e5e5e;font-family:'Noto Sans CJK SC',sans-serif;font-weight:300;transform:scaleX(0.852);transform-origin:0 0">T</div>
<div class="a" style="left:584.2px;top:352.5px;font-size:46px;line-height:1;color:#5e5e5e;font-family:'Noto Sans CJK SC',sans-serif;font-weight:400">百</div>
<div class="a" style="left:627.9px;top:355.9px;font-size:42.3px;line-height:1;color:#5e5e5e;font-family:'Noto Sans CJK SC',sans-serif;font-weight:400">科</div>
<!-- outer border -->
<div class="a" style="left:0;top:406.6px;width:702px;height:1.4px;background:#050506"></div>
<div class="a" style="left:701px;top:330px;width:1px;height:78px;background:#050506"></div>
<div class="a" style="left:0;top:0;width:1.2px;height:408px;background:#050506"></div>

</div>
</body>
</html>
